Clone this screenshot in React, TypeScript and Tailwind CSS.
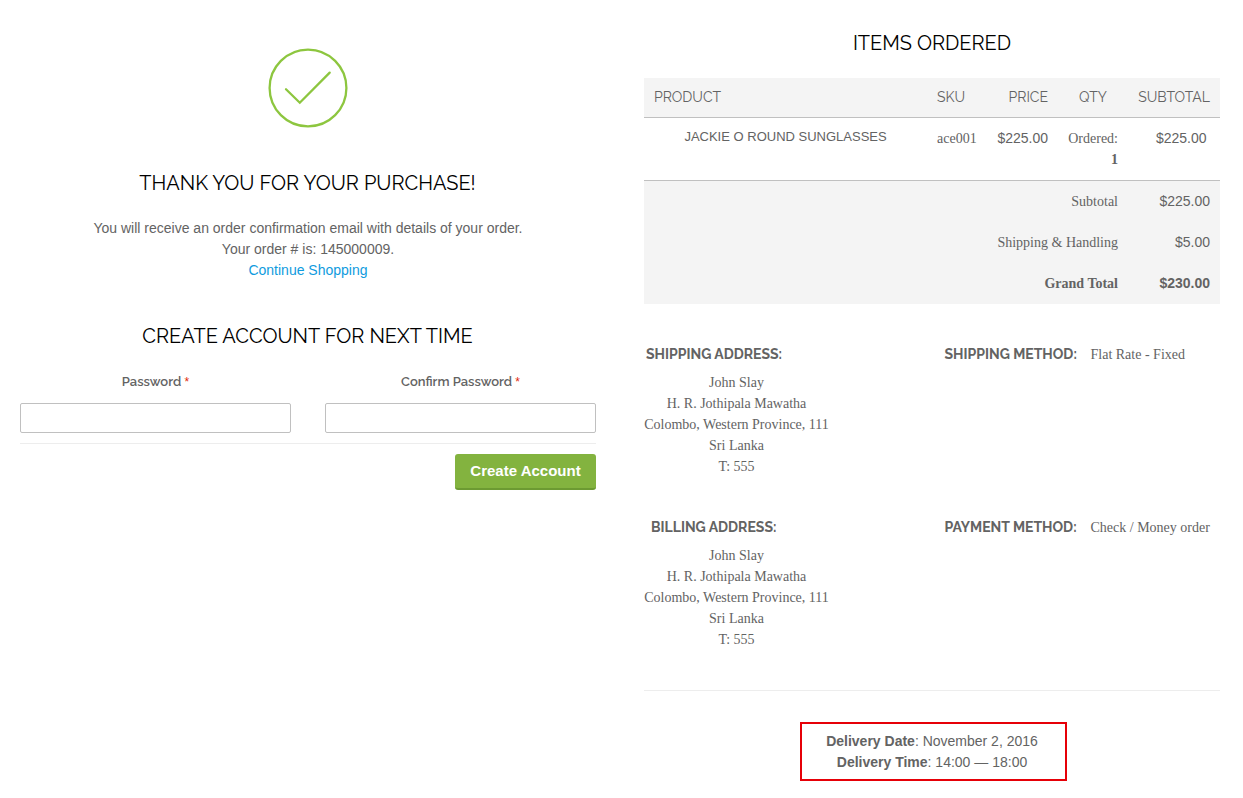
import type { ReactNode } from "react";

const serif = "font-['Liberation_Serif',serif]";

function Heading({ children, className }: { children: ReactNode; className: string }) {
  return (
    <h2 className={`whitespace-nowrap text-center font-['Raleway','Lato',sans-serif] text-[20px] leading-6 text-black ${className}`}>
      {children}
    </h2>
  );
}

function Field({ label, id }: { label: string; id: string }) {
  return (
    <div className="w-[271px]">
      <label htmlFor={id} className="block h-5 pt-px text-center font-['Raleway','Lato',sans-serif] text-[13px] font-semibold leading-5">
        {label} <span className="font-['Liberation_Sans',Arial,sans-serif] text-xs font-normal text-[#df280a]">*</span>
      </label>
      <input id={id} type="password" className="mt-3 block h-[30px] w-full rounded-[2px] border border-[#c0c0c0] bg-white px-2" />
    </div>
  );
}

function Total({ label, value, bold }: { label: string; value: string; bold?: boolean }) {
  return (
    <div className={`flex h-[41px] px-2.5 py-2.5 text-right ${bold ? "font-bold" : ""}`}>
      <span className={`w-[464px] ${serif}`}>{label}</span>
      <span className="flex-1">{value}</span>
    </div>
  );
}

function OrderInfo(props: { title: string; titleClass: string; method: string; value: string }) {
  const label = "block whitespace-nowrap pt-px font-['Raleway','Lato',sans-serif] text-[14px] font-bold leading-[21px]";
  return (
    <section className="flex h-[173px]">
      <div className="w-[300.5px]">
        <h3 className={`${label} ${props.titleClass}`}>{props.title}</h3>
        <address className={`mt-[7px] w-[185px] whitespace-nowrap text-center not-italic ${serif}`}>
          John Slay<br />
          H. R. Jothipala Mawatha<br />
          Colombo, Western Province, 111<br />
          Sri Lanka<br />
          T: 555
        </address>
      </div>
      <h3 className={`${label} w-[146px]`}>{props.method}</h3>
      <p className={`mt-px whitespace-nowrap ${serif}`}>{props.value}</p>
    </section>
  );
}

export default function App() {
  return (
    <main className="flex h-[798px] w-[1243px] gap-12 overflow-hidden bg-white px-5 font-['Liberation_Sans',Arial,sans-serif] text-sm leading-[21px] text-[#636363]">
      <section className="w-[576px] pt-12">
        <svg className="mx-auto block" width="80" height="80" viewBox="0 0 80 80" fill="none" stroke="#8dc63f" strokeWidth="2.3">
          <circle cx="40" cy="40" r="38.4" />
          <path d="m18 41.2 13.8 13.5L61.7 24.6" strokeLinecap="round" />
        </svg>
        <Heading className="mt-[43px] pr-px">THANK YOU FOR YOUR PURCHASE!</Heading>
        <div className="mt-[23px] text-center">
          <p>You will receive an order confirmation email with details of your order.</p>
          <p>Your order # is: 145000009.</p>
          <a href="#shop" className="text-[#0f9bde]">Continue Shopping</a>
        </div>
        <Heading className="mt-[43px] pr-px">CREATE ACCOUNT FOR NEXT TIME</Heading>
        <form>
          <div className="mt-[23px] flex justify-between">
            <Field id="password" label="Password" />
            <Field id="confirmation" label="Confirm Password" />
          </div>
          <div className="mt-2.5 flex justify-end border-t border-[#ededed] pt-2.5">
            <button type="button" className="h-9 w-[141px] whitespace-nowrap rounded-[3px] border-b-2 border-[#6c9a32] bg-[#83b33f] pb-0.5 text-[15px] font-bold text-white">
              Create Account
            </button>
          </div>
        </form>
      </section>

      <section className="w-[576px] pt-[31px]">
        <Heading className="">ITEMS ORDERED</Heading>
        <div className="mt-[23px]">
          <div className="grid h-10 grid-cols-[283px_60px_71px_70px_92px] border-b border-[#c0c0c0] bg-[#f4f4f4] font-['Raleway','Lato',sans-serif] text-[14px] leading-[38px]">
            <span className="pl-2.5">PRODUCT</span>
            <span className="pl-2.5">SKU</span>
            <span className="pr-2.5 text-right">PRICE</span>
            <span className="text-center">QTY</span>
            <span className="pr-2.5 text-right">SUBTOTAL</span>
          </div>
          <div className="grid h-[63px] grid-cols-[283px_60px_71px_70px_92px] border-b border-[#c0c0c0] pt-2.5">
            <span className="pl-[40.4px] text-[13px] leading-[17px]">JACKIE O ROUND SUNGLASSES</span>
            <span className={`pl-2.5 ${serif}`}>ace001</span>
            <span className="pr-2.5 text-right">$225.00</span>
            <span className={`pr-2.5 text-right ${serif}`}>Ordered:<br /><b>1</b></span>
            <span className="pr-[13.5px] text-right">$225.00</span>
          </div>
          <div className="bg-[#f4f4f4]">
            <Total label="Subtotal" value="$225.00" />
            <Total label="Shipping & Handling" value="$5.00" />
            <Total label="Grand Total" value="$230.00" bold />
          </div>
        </div>
        <div className="mt-[39px] h-[348px] border-b border-[#ededed]">
          <OrderInfo title="SHIPPING ADDRESS:" titleClass="pl-0.5" method="SHIPPING METHOD:" value="Flat Rate - Fixed" />
          <OrderInfo title="BILLING ADDRESS:" titleClass="pl-[7px]" method="PAYMENT METHOD:" value="Check / Money order" />
        </div>
        <div className="ml-[156px] mt-[31px] h-[59px] w-[267px] border-2 border-[#e60008] pr-[3px] pt-[7px] text-center">
          <p><b>Delivery Date</b>: November 2, 2016</p>
          <p><b>Delivery Time</b>: 14:00 — 18:00</p>
        </div>
      </section>
    </main>
  );
}
